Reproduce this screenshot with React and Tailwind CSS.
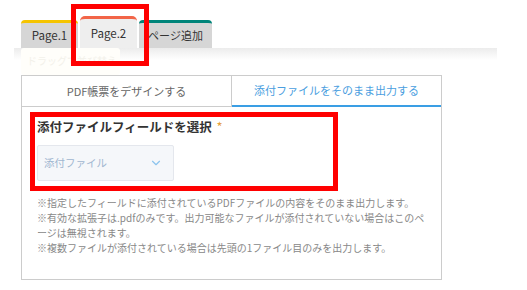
import { FiChevronDown } from 'react-icons/fi';

const font = { fontFamily: '"Noto Sans CJK JP", "Noto Sans", sans-serif' };

const PageTabs = () => (
  <div className="flex items-end gap-[2px] pl-[21px] pt-[16px] h-[48px]">
    <div className="w-[57px] h-[28px] rounded-t-[4px] border-t-[3px] border-[#f5c400] bg-[#d6d6d6] flex items-center justify-center text-[11.5px] text-[#333]">
      Page.1
    </div>
    <div className="w-[57px] h-[32px] rounded-t-[5px] border-t-[3px] border-[#f26548] bg-[#eeeeee] flex items-center justify-center text-[11.5px] text-[#333]">
      Page.2
    </div>
    <div className="w-[73px] h-[28px] rounded-t-[4px] border-t-[3px] border-[#00857a] bg-[#d6d6d6] flex items-center justify-center text-[11px] text-[#333]">
      ページ追加
    </div>
  </div>
);

export default function App() {
  return (
    <div className="relative w-[527px] h-[290px] bg-white overflow-hidden" style={font}>
      <PageTabs />

      {/* drag hint + shadow band */}
      <div className="relative h-[27px]">
        <div className="absolute left-[14px] w-[483px] top-0 h-[12px] bg-gradient-to-b from-[#ececec] to-white" />
        <div className="absolute left-[21px] top-0 w-[99px] h-[27px] bg-[#fffefa] rounded-[3px] px-[6px] pt-[5px] text-[10px] whitespace-nowrap text-[#f3f1ea]">
          ドラッグで並び替え
        </div>
      </div>

      <div className="ml-[21px] w-[421px] h-[205px] border border-[#cccccc]">
        <div className="flex h-[31px]">
          <div className="w-[210px] border-r border-b border-[#cccccc] flex items-center justify-center text-[11px] text-[#666]">
            PDF帳票をデザインする
          </div>
          <div className="flex-1 border-b-2 border-[#3a9ee4] flex items-center justify-center text-[11px] text-[#4a9ee0]">
            添付ファイルをそのまま出力する
          </div>
        </div>

        <div className="pl-[15px] pt-[11px]">
          <div className="text-[12.5px] font-bold text-[#333] leading-[18px]">
            添付ファイルフィールドを選択 <span className="ml-[2px] text-[13px] text-[#e6a23c] font-normal">*</span>
          </div>
          <div className="mt-[9px] w-[137px] h-[36px] bg-[#f5f7fa] border border-[#e4e7ed] rounded-[2px] flex items-center justify-between pl-[6px] pr-[10px]">
            <span className="text-[10.5px] text-[#9fb6d0]">添付ファイル</span>
            <FiChevronDown className="text-[#8cc4ee]" size={14} />
          </div>
          <div className="mt-[14px] text-[10px] leading-[15px] text-[#888] pr-[12px]">
            <p>※指定したフィールドに添付されているPDFファイルの内容をそのまま出力します。</p>
            <p>※有効な拡張子は.pdfのみです。出力可能なファイルが添付されていない場合はこのページは無視されます。</p>
            <p>※複数ファイルが添付されている場合は先頭の1ファイル目のみを出力します。</p>
          </div>
        </div>
      </div>

      {/* annotation boxes */}
      <div className="absolute left-[71px] top-[4px] w-[78px] h-[62px] border-[5px] border-[#ff0000]" />
      <div className="absolute left-[30px] top-[112px] w-[308px] h-[79px] border-[5px] border-[#ff0000]" />
    </div>
  );
}
